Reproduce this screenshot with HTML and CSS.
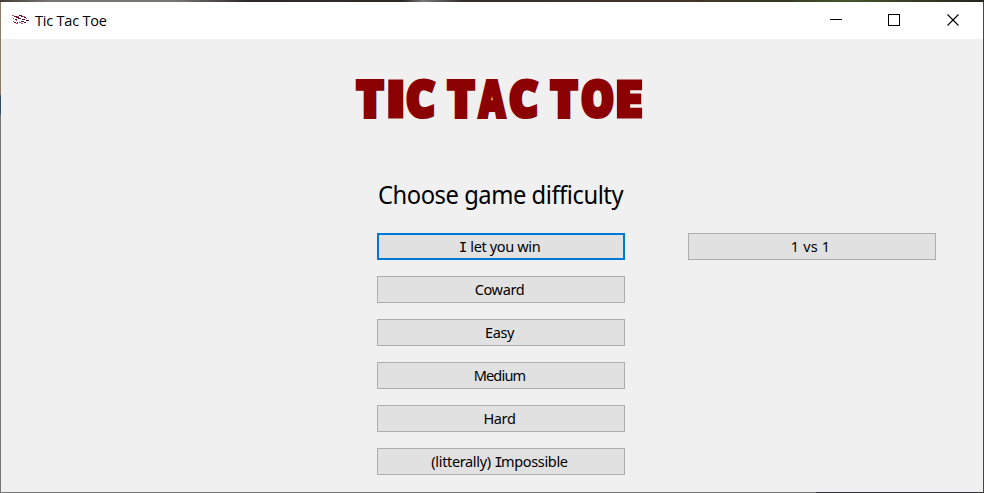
FILE: index.html
```html
<!DOCTYPE html>
<html lang="en">
<head>
<meta charset="utf-8">
<title>Tic Tac Toe</title>
<link rel="stylesheet" href="styles.css">
</head>
<body>
<div class="window">
  <header class="titlebar">
    <svg class="app-icon" width="18" height="13" viewBox="0 0 18 13" fill="none" shape-rendering="crispEdges">
      <path d="M2 2.500h3M4 3.500h3M7 1.500h3M9 2.500h2M12 3.500h2M3 5.500h2M6 4.500h3M10 5.500h3M14 6.500h3M2 8.500h2M5 8.500h1M9 7.500h3M12 8.500h2" stroke="#5b1730"/>
      <path d="M0 1.500h2M5 2.500h2M11 2.500h2M1 4.500h1M4 6.500h1M7 8.500h2M4 9.500h2M9 9.500h2M14 4.500h1M1 7.500h1" stroke="#a55b6b"/>
    </svg>
    <span class="caption">Tic Tac Toe</span>
    <svg class="controls" width="140" height="15" viewBox="0 0 140 15" fill="none" stroke="#000">
      <path d="M5 6.500h12"/>
      <rect x="63.500" y="1.500" width="11" height="11"/>
      <path d="M122.500 1.500l11 11M133.500 1.500l-11 11" stroke-width="1.1"/>
    </svg>
  </header>
  <main class="content">
    <h1 class="logo">
      <svg width="290" height="46" viewBox="354 76 290 46">
        <text class="logo-text" y="116.500"><tspan x="356.500" textLength="27" lengthAdjust="spacingAndGlyphs">T</tspan><tspan class="thin" x="385.500" textLength="20.500" lengthAdjust="spacingAndGlyphs">I</tspan><tspan x="406" textLength="29" lengthAdjust="spacingAndGlyphs">C</tspan> <tspan x="447.500" textLength="27" lengthAdjust="spacingAndGlyphs">T</tspan><tspan x="479" textLength="26" lengthAdjust="spacingAndGlyphs">A</tspan><tspan x="509" textLength="29" lengthAdjust="spacingAndGlyphs">C</tspan> <tspan x="550.500" textLength="27" lengthAdjust="spacingAndGlyphs">T</tspan><tspan x="581" textLength="33" lengthAdjust="spacingAndGlyphs">O</tspan><tspan class="thin" x="614.500" textLength="28.500" lengthAdjust="spacingAndGlyphs">E</tspan></text>
      </svg>
    </h1>
    <h2 class="heading">Choose game difficulty</h2>
    <div class="choices">
      <div class="levels">
        <button class="btn focused"><span class="serif-i lone">I</span> let you win</button>
        <button class="btn">Coward</button>
        <button class="btn">Easy</button>
        <button class="btn tight">Medium</button>
        <button class="btn">Hard</button>
        <button class="btn">(litterally) <span class="serif-i">I</span>mpossible</button>
      </div>
      <button class="btn versus">1 vs 1</button>
    </div>
  </main>
</div>
</body>
</html>
```
FILE: styles.css
```css
* { box-sizing: border-box; }
body {
  margin: 0;
  width: 984px;
  height: 493px;
  overflow: hidden;
  padding: 2px 1px 1px;
  background:
    linear-gradient(90deg, #777 816px, #34363a 816px) 0 492px / 984px 1px no-repeat,
    linear-gradient(90deg, #443d37, #77736e 5%, #77736e 18%, #30292a 25%, #302a26 41%, #777 43%, #352e29 47%, #443529 70%, #343c24 80%, #45562a 86%, #25251e) 0 0 / 984px 2px no-repeat,
    linear-gradient(#45454a) 983px 0 / 1px 493px no-repeat,
    linear-gradient(#8b7c67 94px, #354960 96px, #354960 113px, #777 116px);
  font-family: "Noto Sans", sans-serif;
  color: #000;
}
.window { height: 490px; background: #f0f0f0; }
.titlebar {
  height: 37px;
  display: flex;
  align-items: center;
  background: #fff;
  padding: 0 17px 0 11px;
}
.caption {
  font-family: "Open Sans", sans-serif;
  font-size: 14.5px;
  letter-spacing: -0.2px;
  margin-left: 5px;
}
.controls { margin-left: auto; margin-right: 1px; }
.content { padding-top: 37px; }
.logo { margin: 0 0 0 353px; height: 46px; line-height: 0; }
.logo svg { overflow: visible; }
.logo-text {
  font-family: "Open Sans", sans-serif;
  font-size: 49px;
  font-weight: 800;
  fill: #8b0000;
  stroke: #8b0000;
  stroke-width: 4;
}
.thin { stroke-width: 3; }
.heading {
  margin: 52px 0 0 377px;
  width: 260px;
  height: 40px;
  line-height: 40px;
  font-size: 25.5px;
  font-weight: 400;
  letter-spacing: -0.5px;
  white-space: nowrap;
  transform: scaleX(0.932);
  transform-origin: 0 50%;
}
.choices { display: flex; align-items: flex-start; gap: 63px; margin: 19px 0 0 376px; }
.levels { display: flex; flex-direction: column; gap: 16px; }
.btn {
  width: 248px;
  height: 27px;
  padding: 0 3px 0 0;
  border: 1px solid #adadad;
  background: #e1e1e1;
  font: 14.5px/25px "Noto Sans", sans-serif;
  letter-spacing: -0.35px;
  color: #000;
}
.focused { border: 2px solid #0078d7; line-height: 23px; }
.versus { letter-spacing: 0.2px; }
.tight { letter-spacing: -0.8px; }
.serif-i { font-family: "DejaVu Sans Mono", monospace; font-size: 14px; letter-spacing: -1.5px; }
.lone { letter-spacing: -0.2px; }
```
